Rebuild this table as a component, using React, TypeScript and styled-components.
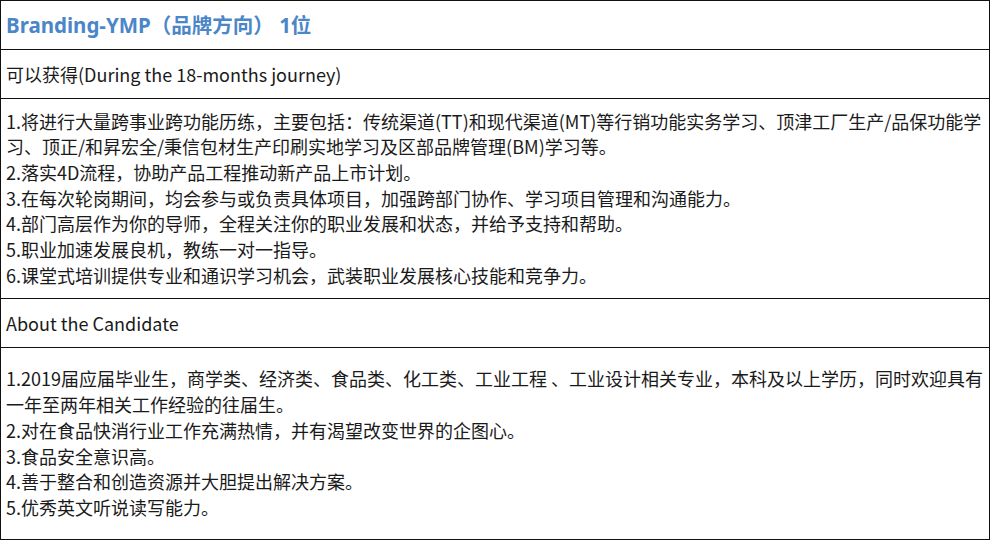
import { ReactElement } from 'react'
import styled, { createGlobalStyle } from 'styled-components'

const GlobalStyle = createGlobalStyle`
  html, body {
    margin: 0;
    padding: 0;
    background: #ffffff;
  }
  body {
    font-family: 'Noto Sans CJK SC', 'Noto Sans', sans-serif;
    color: #1a1a1a;
  }
`

const gains = [
  '1.将进行大量跨事业跨功能历练，主要包括：传统渠道(TT)和现代渠道(MT)等行销功能实务学习、顶津工厂生产/品保功能学习、顶正/和昇宏全/秉信包材生产印刷实地学习及区部品牌管理(BM)学习等。',
  '2.落实4D流程，协助产品工程推动新产品上市计划。',
  '3.在每次轮岗期间，均会参与或负责具体项目，加强跨部门协作、学习项目管理和沟通能力。',
  '4.部门高层作为你的导师，全程关注你的职业发展和状态，并给予支持和帮助。',
  '5.职业加速发展良机，教练一对一指导。',
  '6.课堂式培训提供专业和通识学习机会，武装职业发展核心技能和竞争力。',
]

const candidate = [
  '1.2019届应届毕业生，商学类、经济类、食品类、化工类、工业工程 、工业设计相关专业，本科及以上学历，同时欢迎具有一年至两年相关工作经验的往届生。',
  '2.对在食品快消行业工作充满热情，并有渴望改变世界的企图心。',
  '3.食品安全意识高。',
  '4.善于整合和创造资源并大胆提出解决方案。',
  '5.优秀英文听说读写能力。',
]

const App = (): ReactElement => (
  <>
    <GlobalStyle />
    <Table>
      <Row $height={48}>
        <Title>Branding-YMP（品牌方向） 1位</Title>
      </Row>
      <Row $height={48}>
        <Label>可以获得(During the 18-months journey)</Label>
      </Row>
      <Row $height={199}>
        <List>
          {gains.map((line) => (
            <Item key={line}>{line}</Item>
          ))}
        </List>
      </Row>
      <Row $height={48}>
        <Label>About the Candidate</Label>
      </Row>
      <Row $height={191}>
        <List>
          {candidate.map((line) => (
            <Item key={line}>{line}</Item>
          ))}
        </List>
      </Row>
    </Table>
  </>
)

export default App

const Table = styled.div`
  display: flex;
  flex-direction: column;
  width: 990px;
  box-sizing: border-box;
  border: 1px solid #111;
`

const Row = styled.div<{ $height: number }>`
  display: flex;
  align-items: center;
  height: ${({ $height }) => $height}px;
  padding: 0 5px;
  border-bottom: 1px solid #111;

  &:last-child {
    border-bottom: none;
  }
`

const Title = styled.h2`
  margin: 0 0 3px;
  font-size: 20.5px;
  font-weight: 700;
  color: #4a86c8;
  font-family: 'Noto Sans', 'Noto Sans CJK SC', sans-serif;
`

const Label = styled.div`
  font-size: 18px;
  line-height: 26px;
`

const List = styled.div`
  display: flex;
  flex-direction: column;
  font-size: 18px;
  line-height: 25.7px;
`

const Item = styled.p`
  margin: 0;
`
